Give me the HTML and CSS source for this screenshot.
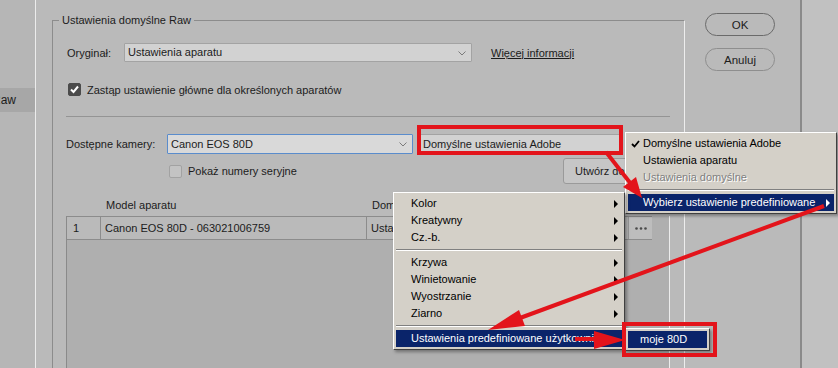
FILE: index.html
```html
<!DOCTYPE html>
<html lang="pl">
<head>
  <meta charset="UTF-8">
  <title>Ustawienia domyślne Raw</title>
  <link rel="stylesheet" href="styles.css">
</head>
<body>
  <div class="sidebar">
    <div class="side-item">Raw</div>
  </div>

  <div class="group">
    <div class="legend">Ustawienia domyślne Raw</div>

    <div class="row row-orig">
      <span class="label lbl-orig">Oryginał:</span>
      <div class="select sel-orig">Ustawienia aparatu
        <svg class="chev" width="8" height="5" viewBox="0 0 8 5"><polyline points="0.5,0.5 4,4 7.5,0.5" fill="none" stroke="#7a7a7a"/></svg>
      </div>
      <a class="link">Więcej informacji</a>
    </div>

    <div class="row row-check">
      <span class="check on">
        <svg width="11" height="11" viewBox="0 0 11 11"><polyline points="2,5.5 4.5,8 9,2.5" fill="none" stroke="#fff" stroke-width="2"/></svg>
      </span>
      <span>Zastąp ustawienie główne dla określonych aparatów</span>
    </div>

    <div class="sep"></div>

    <div class="row row-cam">
      <span class="label lbl-cam">Dostępne kamery:</span>
      <div class="select sel-cam">Canon EOS 80D
        <svg class="chev" width="8" height="5" viewBox="0 0 8 5"><polyline points="0.5,0.5 4,4 7.5,0.5" fill="none" stroke="#7a7a7a"/></svg>
      </div>
      <div class="select sel-def">Domyślne ustawienia Adobe</div>
    </div>

    <div class="row row-serial">
      <span class="check"></span>
      <span>Pokaż numery seryjne</span>
      <button class="btn-create">Utwórz domyślne</button>
    </div>

    <div class="thead">
      <span class="th-model">Model aparatu</span>
      <span>Domyślne</span>
    </div>

    <div class="table">
      <div class="tr">
        <span class="td td-num">1</span>
        <span class="td td-model">Canon EOS 80D - 063021006759</span>
        <span class="td td-def">Ustawienia aparatu</span>
        <span class="td td-more">
          <svg width="12" height="3" viewBox="0 0 12 3"><circle cx="1.5" cy="1.5" r="1.3" fill="#4a4a4a"/><circle cx="6" cy="1.5" r="1.3" fill="#4a4a4a"/><circle cx="10.5" cy="1.5" r="1.3" fill="#4a4a4a"/></svg>
        </span>
      </div>
    </div>
  </div>

  <div class="actions">
    <button class="btn btn-default">OK</button>
    <button class="btn">Anuluj</button>
  </div>

  <div class="edge"></div>

  <!-- popup menus -->
  <div class="menu menu-top">
    <div class="item">
      <svg class="tick" width="9" height="8" viewBox="0 0 9 8"><polyline points="1,4 3.5,6.5 8,1" fill="none" stroke="#000" stroke-width="1.8"/></svg>
      Domyślne ustawienia Adobe
    </div>
    <div class="item">Ustawienia aparatu</div>
    <div class="item disabled">Ustawienia domyślne</div>
    <div class="msep"></div>
    <div class="item active sub">Wybierz ustawienie predefiniowane</div>
  </div>

  <div class="menu menu-presets">
    <div class="item sub">Kolor</div>
    <div class="item sub">Kreatywny</div>
    <div class="item sub">Cz.-b.</div>
    <div class="msep"></div>
    <div class="item sub">Krzywa</div>
    <div class="item sub">Winietowanie</div>
    <div class="item sub">Wyostrzanie</div>
    <div class="item sub">Ziarno</div>
    <div class="msep"></div>
    <div class="item active">Ustawienia predefiniowane użytkownika</div>
  </div>

  <div class="menu menu-user">
    <div class="item active">moje 80D</div>
  </div>

  <!-- annotations -->
  <div class="mark mark-default"></div>
  <div class="mark mark-user"></div>

  <svg class="arrows" width="838" height="368" viewBox="0 0 838 368">
    <g fill="#e3141b" stroke="#e3141b">
      <line x1="606" y1="152" x2="631" y2="184" stroke-width="4"/>
      <polygon points="642,198 636,177 623,187" stroke="none"/>
      <line x1="824" y1="206" x2="520" y2="318" stroke-width="4"/>
      <polygon points="488,330 525,326 519,310" stroke="none"/>
      <line x1="575" y1="339" x2="598" y2="339" stroke-width="4"/>
      <polygon points="625,340 594,331 594,349" stroke="none"/>
    </g>
  </svg>
</body>
</html>
```

FILE: styles.css
```css
body {
  margin: 0;
  height: 368px;
  overflow: hidden;
  display: flex;
  align-items: stretch;
  background: #bababa;
  font-family: "Liberation Sans", Arial, sans-serif;
  font-size: 11px;
  color: #1c1c1c;
  position: relative;
}

.sidebar {
  flex: none;
  width: 35px;
  border-right: 1px solid #ececec;
  background: #b6b6b6;
}

.side-item {
  margin-top: 88px;
  height: 24px;
  line-height: 24px;
  background: #a7a7a7;
  text-indent: -8px;
  white-space: nowrap;
  overflow: hidden;
  font-size: 12px;
}

.group {
  flex: none;
  box-sizing: border-box;
  width: 633px;
  margin: 20px 0 0 16px;
  padding: 0 14px 0 13px;
  border-top: 1px solid #8c8c8c;
  border-left: 1px solid #8c8c8c;
  border-right: 1px solid #ededed;
  display: flex;
  flex-direction: column;
}

.legend {
  align-self: flex-start;
  margin: -7px 0 0 -7px;
  padding: 0 3px;
  line-height: 13px;
  background: #bababa;
}

.row {
  display: flex;
  align-items: center;
  white-space: nowrap;
}

.row-orig {
  margin-top: 16px;
  height: 19px;
}

.label {
  flex: none;
}

.lbl-orig {
  width: 58px;
  padding-left: 1px;
  box-sizing: border-box;
}

.select {
  position: relative;
  box-sizing: border-box;
  height: 19px;
  line-height: 17px;
  padding-left: 3px;
  background: #d2d2d2;
  border: 1px solid #a3a3a3;
  border-radius: 1px;
}

.chev {
  position: absolute;
  right: 5px;
  top: 7px;
}

.sel-orig {
  width: 348px;
}

.link {
  margin-left: 19px;
  text-decoration: underline;
}

.row-check {
  margin-top: 21px;
  height: 13px;
}

.check {
  flex: none;
  box-sizing: border-box;
  width: 13px;
  height: 13px;
  margin-left: 2px;
  margin-right: 6px;
  border: 1px solid #a2a2a2;
  border-radius: 2px;
  background: #c3c3c3;
  display: flex;
  align-items: center;
  justify-content: center;
}

.check.on {
  background: #4b4b4b;
  border-color: #4b4b4b;
}

.sep {
  margin-top: 20px;
  height: 1px;
  background: #949494;
}

.row-cam {
  margin-top: 17px;
  height: 20px;
}

.lbl-cam {
  width: 101px;
}

.sel-cam {
  width: 246px;
  height: 20px;
  line-height: 18px;
  background: #d9d9d9;
  border-color: #5a8ccc;
}

.sel-def {
  width: 201px;
  margin-left: 6px;
  height: 20px;
  line-height: 18px;
}

.row-serial {
  margin-top: 4px;
  height: 26px;
}

.row-serial .check {
  margin-left: 103px;
}

.btn-create {
  margin-left: auto;
  width: 107px;
  height: 26px;
  padding: 0 0 0 11px;
  text-align: left;
  font: inherit;
  color: inherit;
  background: #c6c6c6;
  border: 1px solid #9a9a9a;
  border-radius: 3px;
}

.thead {
  margin-top: 14px;
  height: 15px;
  line-height: 15px;
  display: flex;
  white-space: nowrap;
}

.th-model {
  padding-left: 40px;
  width: 306px;
  box-sizing: border-box;
}

.table {
  margin-top: 3px;
  flex: 1;
  background: #afafaf;
  border-left: 1px solid #8a8a8a;
  border-right: 1px solid #ececec;
}

.tr {
  display: flex;
  height: 22px;
  margin-right: 17px;
  background: #bababa;
  border-top: 1px solid #8c8c8c;
  border-bottom: 1px solid #8c8c8c;
  white-space: nowrap;
}

.td {
  line-height: 22px;
  box-sizing: border-box;
  overflow: hidden;
}

.td-num {
  width: 34px;
  padding-left: 6px;
  border-right: 1px solid #8c8c8c;
}

.td-model {
  width: 266px;
  padding-left: 4px;
  border-right: 1px solid #8c8c8c;
}

.td-def {
  flex: 1;
  padding-left: 4px;
}

.td-more {
  width: 24px;
  display: flex;
  align-items: center;
  justify-content: center;
  background: #bdbdbd;
  border-left: 1px solid #9a9a9a;
}

.actions {
  flex: none;
  width: 70px;
  margin: 13px 0 0 20px;
  display: flex;
  flex-direction: column;
  gap: 12px;
}

.btn {
  height: 23px;
  font: inherit;
  font-size: 11.5px;
  color: #1c1c1c;
  background: transparent;
  border: 1px solid #8e8e8e;
  border-radius: 12px;
}

.btn-default {
  border-color: #6a6a6a;
}

.edge {
  flex: none;
  margin-left: 25px;
  width: 36px;
  border-left: 2px solid #8a8a8a;
  background: #c1c1c1;
}

/* popup menus */
.menu {
  position: absolute;
  box-sizing: border-box;
  padding: 2px;
  background: #d4d0c8;
  border-top: 1px solid #ffffff;
  border-left: 1px solid #ffffff;
  border-right: 1px solid #404040;
  border-bottom: 1px solid #404040;
  box-shadow: 2px 2px 3px rgba(0, 0, 0, 0.35);
  color: #000;
  font-size: 11px;
}

.item {
  position: relative;
  height: 17px;
  line-height: 17px;
  padding-left: 15px;
  white-space: nowrap;
  overflow: hidden;
}

.item.sub::after {
  content: "";
  position: absolute;
  right: 4px;
  top: 5px;
  border-left: 4px solid #000;
  border-top: 4px solid transparent;
  border-bottom: 4px solid transparent;
}

.item.active {
  background: #0a246a;
  color: #ffffff;
}

.item.active.sub::after {
  border-left-color: #ffffff;
}

.item.disabled {
  color: #808080;
  text-shadow: 1px 1px 0 #ffffff;
}

.tick {
  position: absolute;
  left: 3px;
  top: 5px;
}

.msep {
  margin: 3px 0;
  border-top: 1px solid #808080;
  border-bottom: 1px solid #ffffff;
}

.menu-top {
  left: 625px;
  top: 132px;
  width: 212px;
}

.menu-presets {
  left: 393px;
  top: 192px;
  width: 232px;
}

.menu-user {
  left: 625px;
  top: 328px;
  width: 85px;
}

.menu-user .item {
  padding-left: 12px;
}

/* annotations */
.mark {
  position: absolute;
  box-sizing: border-box;
  border: 4px solid #e3141b;
}

.mark-default {
  left: 417px;
  top: 125px;
  width: 206px;
  height: 30px;
}

.mark-user {
  left: 622px;
  top: 322px;
  width: 95px;
  height: 35px;
}

.arrows {
  position: absolute;
  left: 0;
  top: 0;
  pointer-events: none;
}
```
